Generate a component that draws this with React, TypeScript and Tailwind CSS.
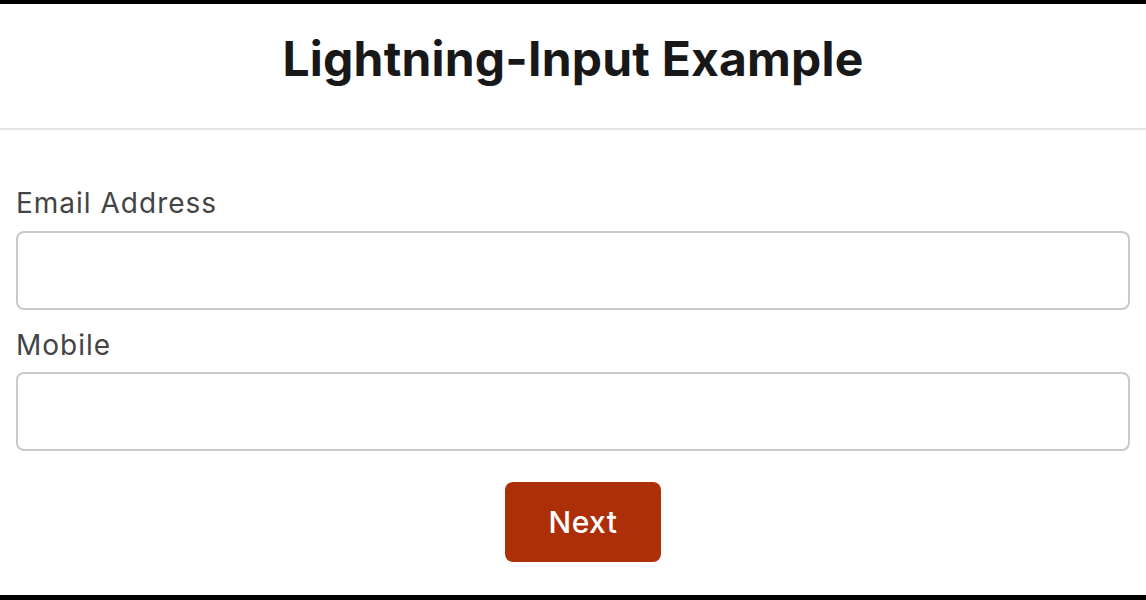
const App = () => {
  return (
    <div
      className="w-[1146px] h-[600px] bg-white flex flex-col border-t-4 border-b-[5px] border-black overflow-hidden"
      style={{ fontFamily: "Inter, 'Noto Sans', sans-serif" }}
    >
      {/* Header */}
      <div className="h-[126px] flex items-center justify-center border-b-2 border-[#e5e5e5] shrink-0">
        <h1 className="text-[48px] font-bold text-[#181818] tracking-[0.2px] leading-none -mt-[14px]">
          Lightning-Input Example
        </h1>
      </div>

      {/* Form */}
      <div className="flex flex-col px-4 pt-[56px]">
        <label className="text-[28px] text-[#444444] leading-[34px] tracking-[1px] mb-[11px]">Email Address</label>
        <input
          type="email"
          className="h-[79px] w-full border-2 border-[#c9c9c9] rounded-[8px] px-4 outline-none"
        />
        <label className="text-[28px] text-[#444444] leading-[34px] tracking-[1px] mt-[18px] mb-[10px]">Mobile</label>
        <input
          type="tel"
          className="h-[79px] w-full border-2 border-[#c9c9c9] rounded-[8px] px-4 outline-none"
        />
        <div className="flex mt-[31px] pl-[489px]">
          <button className="w-[156px] h-[80px] bg-[#ad2f08] rounded-[8px] text-white text-[30px] font-medium tracking-[0.5px]">
            Next
          </button>
        </div>
      </div>
    </div>
  );
};

export default App;
